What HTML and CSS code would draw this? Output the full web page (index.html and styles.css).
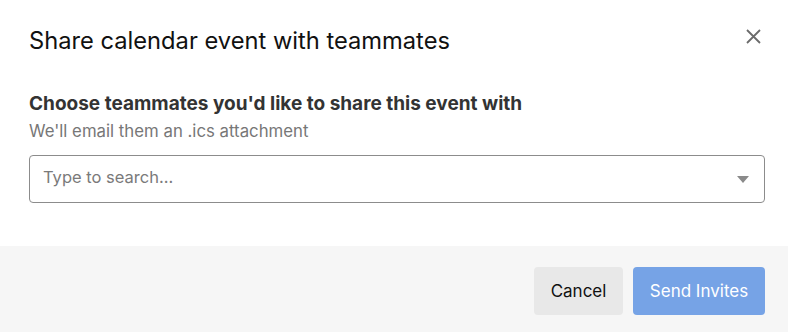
FILE: index.html
```html
<!DOCTYPE html>
<html lang="en">
<head>
<meta charset="utf-8">
<title>Share calendar event</title>
<link rel="stylesheet" href="styles.css">
</head>
<body>
<div class="modal">
  <div class="modal-header">
    <h1 class="modal-title">Share calendar event with teammates</h1>
    <button class="close-btn" aria-label="Close">
      <svg width="15" height="15" viewBox="0 0 15 15"><path d="M1 1L14 14M14 1L1 14" stroke="#6b6b6b" stroke-width="1.8" fill="none"/></svg>
    </button>
  </div>
  <div class="modal-body">
    <h2 class="field-label">Choose teammates you'd like to share this event with</h2>
    <p class="field-hint">We'll email them an .ics attachment</p>
    <div class="select">
      <span class="placeholder">Type to search...</span>
      <svg class="caret" width="12" height="7" viewBox="0 0 12 7"><path d="M0 0H12L6 7Z" fill="#8a8a8a"/></svg>
    </div>
  </div>
  <div class="modal-footer">
    <button class="btn btn-cancel">Cancel</button>
    <button class="btn btn-primary">Send Invites</button>
  </div>
</div>
</body>
</html>
```
FILE: styles.css
```css
* { box-sizing: border-box; }
html, body { margin: 0; padding: 0; background: #fff; }
body { font-family: Inter, "Noto Sans", sans-serif; color: #111; }
.modal { width: 788px; height: 332px; display: flex; flex-direction: column; }
.modal-header { display: flex; justify-content: space-between; align-items: flex-start; padding: 26px 27px 0 29px; }
.modal-title { margin: 0; font-size: 23.7px; font-weight: 400; line-height: 30px; color: #111; }
.close-btn { border: 0; background: none; padding: 0; margin-top: 3px; width: 15px; height: 15px; display: flex; cursor: pointer; }
.modal-body { padding: 0 23px 0 29px; flex: 1; }
.field-label { margin: 36px 0 0; font-size: 19px; font-weight: 700; line-height: 24px; color: #333; }
.field-hint { margin: 4px 0 0; font-size: 16.8px; line-height: 22px; color: #777; }
.select { margin-top: 13px; height: 48px; border: 1px solid #8c8c8c; border-radius: 4px; display: flex; align-items: center; justify-content: space-between; padding: 0 15px 0 13px; }
.placeholder { font-size: 16.5px; color: #7a7a7a; margin-bottom: 5px; }
.modal-footer { flex: 0 0 86px; height: 86px; background: #f6f6f6; display: flex; justify-content: flex-end; align-items: flex-start; gap: 10px; padding: 21px 23px 0 0; }
.btn { height: 48px; border: 0; border-radius: 4px; font-family: Inter, "Noto Sans", sans-serif; font-size: 17px; padding: 0; }
.btn-cancel { width: 89px; background: #e8e8e8; color: #111; }
.btn-primary { width: 132px; background: #76a3e6; color: #fff; }
```
